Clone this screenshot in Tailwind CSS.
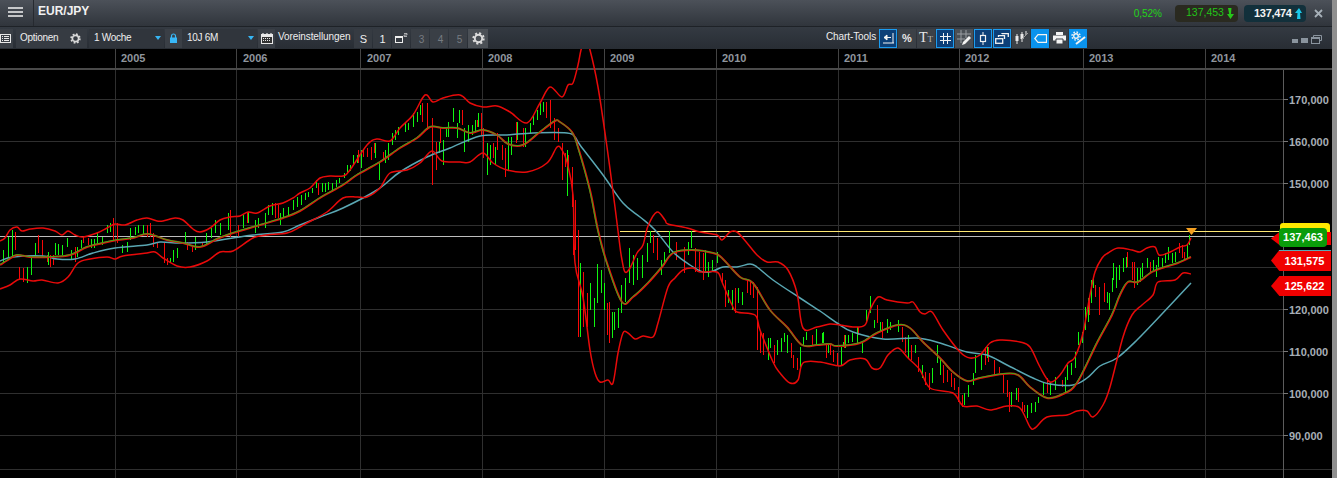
<!DOCTYPE html>
<html lang="de">
<head>
<meta charset="utf-8">
<title>EUR/JPY</title>
<script src="https://cdn.jsdelivr.net/npm/@tailwindcss/browser@4"></script>
</head>
<body class="bg-black">
<div class="w-[1337px] h-[478px] overflow-hidden flex font-['Liberation_Sans',Arial,sans-serif] text-white">
<div class="w-[1332px] h-full flex flex-col">

  <!-- top bar -->
  <header class="h-[27px] shrink-0 flex items-center bg-gradient-to-b from-[#4c5159] to-[#30353c] border-b border-[#1e2227]">
    <div class="w-[34px] h-full flex items-center justify-center border-r border-[#262a30]">
      <svg width="15" height="10" viewBox="0 0 15 10" class="mr-[3px] mb-[3px]"><path d="M0 1h15M0 5h15M0 9h15" stroke="#f2f2f2" stroke-width="1.500"/></svg>
    </div>
    <span class="ml-[4px] text-[12px] font-bold text-[#f1f1f1] mb-[5px]">EUR/JPY</span>
    <div class="ml-auto flex items-center">
      <span class="text-[10px] text-[#22d418] mr-[13px]">0,52%</span>
      <div class="w-[63px] h-[17px] rounded-[4px] bg-[#2a2a20] flex items-center pl-[11px] gap-[3px]">
        <span class="text-[10.500px] text-[#22c418]">137,453</span>
        <svg width="7" height="11" viewBox="0 0 7 11"><path d="M1 0h3.500l-.5 6H7L3.500 11 0 6h2.200z" fill="#27c71a"/></svg>
      </div>
      <div class="w-[62px] h-[17px] rounded-[4px] bg-[#12303b] flex items-center pl-[10px] gap-[3px] ml-[6px]">
        <span class="text-[11px] font-bold text-[#f4f4f4] tracking-[-0.3px]">137,474</span>
        <svg width="7" height="11" viewBox="0 0 7 11"><path d="M4 0l3 5H5l.5 6H2l.5-6H0z" fill="#1cc8e8"/></svg>
      </div>
      <svg width="9" height="9" viewBox="0 0 9 9" class="ml-[8px] mr-[9px]"><path d="M1 1l7 7M8 1L1 8" stroke="#a7b0b8" stroke-width="1.800"/></svg>
    </div>
  </header>

  <!-- toolbar -->
  <div class="h-[22px] shrink-0 flex items-center bg-gradient-to-b from-[#343a42] to-[#282d34] text-[10px] text-[#eeeeee] relative">
    <div class="w-[13px] h-[19px] flex items-center justify-start bg-[#3a3f46]">
      <svg width="11" height="9" viewBox="0 0 11 9"><rect x=".5" y=".5" width="10" height="8" fill="none" stroke="#e8e8e8"/><path d="M2 2.500h1M4 2.500h5M2 4.500h1M4 4.500h5M2 6.500h1M4 6.500h5" stroke="#e8e8e8"/></svg>
    </div>
    <div class="ml-[3px] w-[71px] h-[19px] flex items-center bg-[#363b42] pl-[4px] gap-[10px]">
      <span class="tracking-[-0.3px] mb-[1px]">Optionen</span>
      <svg width="11" height="11" viewBox="0 0 12 12" class="ml-[2px]"><circle cx="6" cy="6" r="3.400" fill="none" stroke="#d8d8d8" stroke-width="1.800"/><circle cx="6" cy="6" r="4.800" fill="none" stroke="#d8d8d8" stroke-width="1.800" stroke-dasharray="1.900 1.870"/></svg>
    </div>
    <div class="ml-[2px] w-[75px] h-[19px] flex items-center justify-between bg-[#30353c] pl-[5px] pr-[3px]">
      <span class="tracking-[-0.3px] mb-[1px]">1 Woche</span>
      <svg width="6" height="4" viewBox="0 0 6 4"><path d="M0 0h6L3 4z" fill="#36b6f4"/></svg>
    </div>
    <div class="w-[17px] h-[19px] ml-[1px] flex items-center justify-center bg-[#3a3f46]">
      <svg width="7" height="10" viewBox="0 0 7 10"><path d="M1.500 5V3a2 2 0 0 1 4 0v2" fill="none" stroke="#38b8f8" stroke-width="1.200"/><rect y="4.500" width="7" height="5.500" fill="#38b8f8"/></svg>
    </div>
    <div class="w-[75px] h-[19px] flex items-center justify-between bg-[#30353c] pl-[5px] pr-[3px]">
      <span class="tracking-[-0.3px] mb-[1px]">10J 6M</span>
      <svg width="6" height="4" viewBox="0 0 6 4"><path d="M0 0h6L3 4z" fill="#36b6f4"/></svg>
    </div>
    <div class="w-[17px] h-[19px] ml-[1px] flex items-center justify-center bg-[#3a3f46]">
      <svg width="12" height="12" viewBox="0 0 12 12"><path d="M0 2h12v10H0z" fill="#e8e8e8"/><path d="M1 5h10v6H1z" fill="#333"/><path d="M2 1v2M10 1v2M6 1v2" stroke="#e8e8e8" stroke-width="1.200"/><path d="M2 6.500h8M2 8.500h8" stroke="#e8e8e8" stroke-dasharray="1 1"/></svg>
    </div>
    <span class="ml-[3px] w-[76px] mb-[3px] whitespace-nowrap tracking-[-0.1px]">Voreinstellungen</span>
    <div class="w-[18px] h-[19px] flex items-center justify-center bg-[#363b42] text-[11px]"><span class="mt-[2px] ml-[1px]">S</span></div>
    <div class="ml-px w-[18px] h-[19px] flex items-center justify-center bg-[#363b42] text-[11px]"><span class="mt-[2px] ml-[1px]">1</span></div>
    <div class="ml-px w-[18px] h-[19px] flex items-start justify-center bg-[#363b42]">
      <svg width="13" height="11" viewBox="0 0 13 11" class="mt-[4px]"><rect x=".5" y="3.500" width="7" height="6" fill="none" stroke="#eee"/><path d="M0 3h8v2H0z" fill="#eee"/><path d="M9 .5h3v1.500H9v1.500h3" fill="none" stroke="#ddd" stroke-width=".7"/></svg>
    </div>
    <div class="ml-px w-[18px] h-[19px] flex items-center justify-center bg-[#3a3f46] text-[#777c82]"><span class="mt-[2px] ml-[3px]">3</span></div>
    <div class="ml-px w-[18px] h-[19px] flex items-center justify-center bg-[#3a3f46] text-[#777c82]"><span class="mt-[2px] ml-[3px]">4</span></div>
    <div class="ml-px w-[18px] h-[19px] flex items-center justify-center bg-[#3a3f46] text-[#777c82]"><span class="mt-[2px] ml-[3px]">5</span></div>
    <div class="ml-px w-[20px] h-[19px] flex items-center justify-center bg-[#4b5056]">
      <svg width="13" height="13" viewBox="0 0 12 12"><circle cx="6" cy="6" r="3.400" fill="none" stroke="#dcdcdc" stroke-width="1.800"/><circle cx="6" cy="6" r="4.800" fill="none" stroke="#dcdcdc" stroke-width="1.800" stroke-dasharray="1.900 1.870"/></svg>
    </div>

    <span class="ml-[338px] w-[53px] mb-[3px] whitespace-nowrap tracking-[-0.1px]">Chart-Tools</span>
    <div class="flex gap-px items-center">
      <div class="w-[18px] h-[19px] bg-[#0c3f78] border border-[#1c9cf0] flex items-center justify-center"><svg width="12" height="11" viewBox="0 0 12 11"><path d="M1 10h11M11 0v10" stroke="#f2f2f2"/><path d="M2 4.500h7M2 4.500l3-2.500v5z" stroke="#f2f2f2" fill="#f2f2f2"/></svg></div>
      <div class="w-[18px] h-[19px] bg-[#3c4147] flex items-center justify-center text-[11px] font-bold text-[#e8e8e8]">%</div>
      <div class="w-[18px] h-[19px] bg-[#3c4147] flex items-center justify-center font-['Liberation_Serif',serif] text-[#e8e8e8]"><span class="text-[14px] leading-none">T</span><span class="text-[9px] leading-none mt-[3px] text-[#bbb]">T</span></div>
      <div class="w-[18px] h-[19px] bg-[#0c3f78] border border-[#1c9cf0] flex items-center justify-center"><svg width="11" height="11" viewBox="0 0 11 11"><path d="M3.500 0v11M7.500 0v11M0 3.500h11M0 7.500h11" stroke="#f2f2f2"/></svg></div>
      <div class="w-[18px] h-[19px] bg-[#4b5056] flex items-center justify-center"><svg width="16" height="16" viewBox="0 0 16 16"><path d="M5 0v13M10 0v8M1 4h14M1 9h8" stroke="#9a9ea2"/><path d="M6 15l1-3 6-6 2 2-6 6z" fill="#f2f2f2"/></svg></div>
      <div class="w-[18px] h-[19px] bg-[#0c3f78] border border-[#1c9cf0] flex items-center justify-center"><svg width="8" height="13" viewBox="0 0 8 13"><path d="M4 0v13" stroke="#f2f2f2"/><rect x="1.500" y="3.500" width="5" height="6" fill="#0c3f78" stroke="#f2f2f2" stroke-width="1.200"/></svg></div>
      <div class="w-[18px] h-[19px] bg-[#0c3f78] border border-[#1c9cf0] flex items-center justify-center"><svg width="14" height="11" viewBox="0 0 14 11"><rect x=".7" y="5.700" width="7" height="4.600" fill="none" stroke="#f2f2f2" stroke-width="1.300"/><path d="M3.500 4V2.700h6V6M7 1V.7h6.300V4" fill="none" stroke="#f2f2f2" stroke-width="1.300"/></svg></div>
      <div class="w-[18px] h-[19px] bg-[#3c4147] flex items-center justify-center"><svg width="14" height="14" viewBox="0 0 14 14"><path d="M3 3v10M8 1v10M12 0v4" stroke="#e8e8e8"/><rect x="1.500" y="5" width="3" height="5" fill="#e8e8e8"/><rect x="6.500" y="3" width="3" height="5" fill="#e8e8e8"/><path d="M7 9l7-7" stroke="#9a9a9a"/></svg></div>
      <div class="w-[18px] h-[19px] bg-[#0a93ee] flex items-center justify-center"><svg width="13" height="9" viewBox="0 0 13 9"><path d="M12.500.700H4L.8 4.500 4 8.300h8.500z" fill="none" stroke="#f2f2f2" stroke-width="1.200"/></svg></div>
      <div class="w-[18px] h-[19px] bg-[#3c4147] flex items-center justify-center"><svg width="13" height="12" viewBox="0 0 13 12"><path d="M3 0h7v3H3zM0 3.500h13v5H0z" fill="#f4f4f4"/><path d="M3 7h7v5H3z" fill="#f4f4f4" stroke="#3c4147"/></svg></div>
      <div class="w-[18px] h-[19px] bg-[#0a93ee] flex items-center justify-center"><svg width="15" height="14" viewBox="0 0 15 14"><circle cx="5" cy="5" r="2.300" fill="none" stroke="#f2f2f2" stroke-width="1.400"/><circle cx="5" cy="5" r="4" fill="none" stroke="#f2f2f2" stroke-width="1.400" stroke-dasharray="1.600 1.540"/><path d="M5 13l9-7" stroke="#f2f2f2" stroke-width="2"/></svg></div>
    </div>
    <div class="ml-auto mr-[10px] flex items-center gap-[2px] mt-[3px]">
      <div class="w-[6px] h-[4px] mt-[2px] bg-[#8a949e]"></div>
      <div class="w-[7px] h-[5px] mt-[2px] ml-px bg-[#8a949e]"></div>
      <svg width="11" height="9" viewBox="0 0 11 9" class="ml-px"><path d="M2.500 2V.5h8v5H9" fill="none" stroke="#8a949e"/><rect y="2" width="9" height="7" fill="#8a949e"/><rect x="1" y="4" width="7" height="4" fill="#2b3037"/></svg>
    </div>
  </div>

  <!-- chart -->
  <section class="flex-1 min-h-0 flex flex-col bg-black relative overflow-hidden">
    <div class="h-[21px] shrink-0 flex text-[11px] font-bold text-[#8f959d] border-b-2 border-[#4a4a4a]">
      <div class="w-[115px]"></div>
      <div class="w-[121px] border-l border-[#444] pl-[5px] leading-[18px]">2005</div>
      <div class="w-[124px] border-l border-[#444] pl-[6px] leading-[18px]">2006</div>
      <div class="w-[122px] border-l border-[#444] pl-[6px] leading-[18px]">2007</div>
      <div class="w-[122px] border-l border-[#444] pl-[5px] leading-[18px]">2008</div>
      <div class="w-[112px] border-l border-[#444] pl-[5px] leading-[18px]">2009</div>
      <div class="w-[122px] border-l border-[#444] pl-[5px] leading-[18px]">2010</div>
      <div class="w-[121px] border-l border-[#444] pl-[5px] leading-[18px]">2011</div>
      <div class="w-[124px] border-l border-[#444] pl-[5px] leading-[18px]">2012</div>
      <div class="w-[122px] border-l border-[#444] pl-[5px] leading-[18px]">2013</div>
      <div class="w-[127px] border-l border-[#444] pl-[5px] leading-[18px]">2014</div>
    </div>
    <div class="flex-1 min-h-0 relative">
      <svg class="block overflow-visible" width="1332" height="408" viewBox="0 70 1332 408" fill="none">
        <!-- grid -->
        <g stroke="#2f2f2f" shape-rendering="crispEdges">
          <path d="M0 99.500H1283M0 141.500H1283M0 183.500H1283M0 225.500H1283M0 267.500H1283M0 309.500H1283M0 351.500H1283M0 393.500H1283M0 435.500H1283M0 469.500H1332"/>
          <path d="M115.500 70V478M236.500 70V478M360.500 70V478M482.500 70V478M604.500 70V478M716.500 70V478M838.500 70V478M959.500 70V478M1083.500 70V478M1205.500 70V478"/>
        </g>
        <path d="M1283.500 70V478" stroke="#5c5c5c" shape-rendering="crispEdges"/>
        <path d="M1283 99.500h5M1283 141.500h5M1283 183.500h5M1283 225.500h5M1283 309.500h5M1283 351.500h5M1283 393.500h5M1283 435.500h5" stroke="#777" shape-rendering="crispEdges"/>
        <!-- levels -->
        <path d="M0 236.500H1283" stroke="#bdbdbd" shape-rendering="crispEdges"/>
        <path d="M620 231.500H1283" stroke="#ffe873" shape-rendering="crispEdges"/>
        <!-- bars -->
        <path stroke="#10f510" stroke-width="1" shape-rendering="crispEdges" d="M3 250V263M8 237V257M12 230V257M27 267V283M31 257V275M35 243V255M48 252V265M55 243V255M58 244V255M62 245V255M67 238V247M71 250V260M77 247V257M81 240V248M91 239V248M94 239V248M97 233V243M102 237V245M107 225V233M110 223V232M122 245V253M127 242V252M130 228V240M135 227V235M138 225V233M143 225V235M170 258V263M173 250V262M177 248V258M185 232V243M195 237V250M206 233V245M211 228V238M215 220V233M220 223V235M228 213V230M243 215V228M248 212V223M255 220V233M258 218V228M265 213V228M268 205V215M272 203V215M280 213V225M283 208V218M288 207V215M293 200V210M297 197V207
        M301 195V205M305 193V200M308 192V197M312 188V193M316 180V188M322 183V192M325 183V192M328 182V190M332 183V192M336 180V187M339 178V183M344 173V178M347 165V173M350 165V171M353 155V165M357 155V163M361 150V168M375 143V158M379 163V180M385 150V163M388 143V160M392 133V145M395 130V140M398 127V135M405 123V132M408 123V130M413 113V127M417 112V122M420 105V115M439 142V153M443 140V165M446 128V137M448 122V137M453 108V122M457 123V138M459 110V123M464 128V152M468 125V142M472 125V135M475 120V133M478 113V127M487 143V175M490 145V165M495 147V165M508 137V170M511 137V155M517 122V140M525 128V147M530 123V133M533 115V125M537 110V120M540 103V115M543 102V112M567 150V196
        M580 263V337M590 283V310M594 298V327M597 264V303M601 270V293M604 283V310M612 312V338M614 312V330M618 308V328M621 285V313M625 278V302M629 248V283M633 255V285M637 258V280M642 255V278M647 243V262M650 231V243M661 260V275M664 252V265M669 231V253M688 242V255M691 231V248M705 250V272M708 262V277M712 260V272M717 252V263M728 290V303M732 290V310M738 288V303M742 292V305M768 338V360M770 338V348M777 340V355M781 338V352M784 333V342M787 335V353M800 347V367M803 337V345M806 332V340M816 329V345M822 333V343M828 345V353M830 343V350
        M823 332V343M841 347V365M843 342V347M845 335V348M848 335V343M852 333V342M857 327V343M862 343V353M866 310V323M870 296V313M874 320V328M880 322V332M887 319V333M890 322V330M898 320V332M908 335V358M915 345V353M922 365V378M932 368V383M937 345V363M940 358V375M958 387V398M964 393V405M968 385V397M973 373V385M975 355V373M981 353V370M987 347V358M1011 392V407M1016 388V400M1027 405V418M1031 403V413M1035 402V412M1038 397V403M1043 382V395M1050 383V395M1055 377V390M1065 377V393M1067 365V380M1071 363V375M1075 352V368M1078 332V345M1082 332V343M1085 307V330M1088 298V322M1091 280V303M1093 277V288M1107 292V303M1109 293V310M1112 278V292M1113 263V280M1116 267V288M1119 265V280M1123 258V272M1126 257V268M1137 268V285M1140 268V282M1142 263V277M1147 258V268M1153 260V270M1156 265V277M1158 257V267M1162 258V268M1165 253V263M1168 247V260M1172 253V263M1175 252V262M1187 245V258M1189 235V245"/>
        <path stroke="#f80808" stroke-width="1" shape-rendering="crispEdges" d="M15 232V250M19 267V280M23 268V282M38 235V253M42 240V258M47 255V262M50 255V267M53 255V265M75 247V262M83 237V243M88 238V245M113 218V240M117 223V243M147 225V237M150 223V237M153 233V247M157 242V248M164 243V263M167 258V265M187 242V250M192 245V252M202 242V247M230 210V237M238 225V237M247 212V223M275 203V218M278 205V218
        M318 183V195M358 150V163M363 150V157M367 148V157M371 147V160M374 143V153M383 152V160M422 103V122M427 103V130M432 118V185M436 142V170M440 128V143M462 110V125M477 120V127M481 113V135M483 128V158M493 143V158M497 133V150M502 145V160M505 148V177M516 122V143M523 128V147M546 102V118M550 100V128M554 118V140M558 128V142M562 143V180M565 153V167M568 155V170M572 167V207M575 200V250M573 230V255M578 230V337M583 272V327M587 293V327
        M607 303V335M609 302V343M653 235V253M657 238V260M676 242V260M684 247V273M695 248V272M699 252V270M703 253V280M722 273V283M725 280V307M735 288V313M747 280V293M750 280V295M753 282V298M757 287V350M760 332V353M763 333V355M774 345V363M791 343V358M793 355V368M797 358V370M812 335V345M826 345V358M833 350V362M837 353V365
        M826 343V352M830 345V355M844 335V348M858 327V335M877 305V323M882 322V338M902 327V342M905 337V353M911 345V360M918 357V372M925 372V385M929 373V390M943 365V383M947 370V382M951 373V387M954 378V390M958 387V402M962 395V407M985 347V365M988 347V362M994 360V375M999 367V373M1003 375V393M1007 380V397M1009 392V412M1018 388V402M1022 402V412M1024 405V412M1047 378V393M1062 380V387M1089 298V315M1095 285V297M1099 287V315M1104 283V302M1127 252V267M1132 262V280M1134 262V288M1150 262V273M1179 243V253M1182 245V258M1184 252V260"/>
        <!-- teal moving average -->
        <path data-curve stroke="#5aa7b3" stroke-width="1.500" stroke-linejoin="round" d="M0 261L13 257L43 256L57 259L75 259L93 253L115 248L147 245L160 242L180 243L207 242L233 238L253 235L283 232L300 225L320 217L343 208L377 190L400 172L427 157L450 148L480 136L507 135L533 133L567 133L575 137L580 145L603 175L623 203L640 217L655 230L673 252L690 265L703 272L713 271L723 267L737 267L750 264L757 267L773 280L800 298L820 311L837 323L853 332L883 339L917 338L940 343L967 352L987 355L1007 365L1033 378L1050 384L1073 385L1087 378L1100 366L1117 358L1137 340L1161 315L1191 283"/>
        <!-- middle band -->
        <path data-curve stroke="#ea0c0c" stroke-width="2" stroke-linejoin="round" d="M0 265L8 260L17 255L30 257L50 257L70 255L87 247L103 243L117 240L133 238L148 234L167 240L183 243L200 247L217 239L233 233L260 225L283 218L300 211L320 198L343 185L357 175L380 162L400 148L417 138L430 127L443 128L457 128L470 133L483 130L497 135L508 144L523 145L540 132L555 121L560 122L572 132L578 147L590 190L598 230L607 263L622 302L633 297L648 283L662 267L673 253L692 250L713 253L722 258L740 277L753 283L770 310L787 327L802 345L817 345L830 344L837 346L860 343L877 333L898 325L910 328L923 342L940 358L953 372L967 381L980 378L1003 374L1018 375L1030 387L1047 398L1063 394L1077 383L1097 343L1112 315L1120 295L1128 282L1138 282L1152 272L1165 267L1178 263L1191 257"/>
        <path data-curve stroke="#1cc81c" stroke-width=".9" stroke-linejoin="round" transform="translate(-0.5 -0.3)" d="M0 265L8 260L17 255L30 257L50 257L70 255L87 247L103 243L117 240L133 238L148 234L167 240L183 243L200 247L217 239L233 233L260 225L283 218L300 211L320 198L343 185L357 175L380 162L400 148L417 138L430 127L443 128L457 128L470 133L483 130L497 135L508 144L523 145L540 132L555 121L560 122L572 132L578 147L590 190L598 230L607 263L622 302L633 297L648 283L662 267L673 253L692 250L713 253L722 258L740 277L753 283L770 310L787 327L802 345L817 345L830 344L837 346L860 343L877 333L898 325L910 328L923 342L940 358L953 372L967 381L980 378L1003 374L1018 375L1030 387L1047 398L1063 394L1077 383L1097 343L1112 315L1120 295L1128 282L1138 282L1152 272L1165 267L1178 263L1191 257"/>
        <!-- upper band -->
        <path data-curve stroke="#e80a0a" stroke-width="1.500" stroke-linejoin="round" d="M0 241L5 238L10 230L17 227L22 231L30 229L43 228L55 231L62 235L68 231L75 235L83 237L97 233L107 228L115 224L125 225L137 220L147 218L157 221L163 221L175 218L183 220L193 229L200 232L210 228L220 220L230 217L240 216L248 212L257 213L270 206L283 203L293 198L300 193L310 188L320 178L330 176L343 176L350 170L367 145L377 139L390 141L400 128L413 115L425 95L433 102L443 98L460 95L470 103L483 107L497 106L510 112L527 123L540 103L550 87L562 97L568 85L573 83L578 65L581 50L585 38L590 50L598 87L607 147L615 207L620 247L622 260L625 272L630 268L637 253L643 245L648 226L657 212L665 220L668 224L687 228L700 232L717 235L722 240L730 232L737 232L747 243L757 255L767 262L778 262L788 270L797 293L803 328L817 327L830 324L840 325L853 327L865 325L870 310L878 297L887 300L907 303L913 302L920 312L925 314L932 312L943 330L960 352L970 358L980 355L990 343L1000 340L1020 342L1030 347L1040 367L1050 382L1060 375L1068 363L1075 357L1083 333L1090 295L1095 272L1102 258L1108 253L1118 248L1132 250L1140 252L1147 248L1155 247L1159 255L1168 253L1180 247L1187 245L1191 238"/>
        <!-- lower band -->
        <path data-curve stroke="#e80a0a" stroke-width="1.500" stroke-linejoin="round" d="M0 289L10 285L20 279L33 281L42 280L58 283L68 277L78 263L90 259L107 257L115 259L123 256L147 253L155 252L163 258L177 266L190 267L207 261L220 252L233 251L253 238L267 235L287 233L300 227L307 223L327 212L343 198L357 197L367 197L380 188L390 173L407 170L420 163L432 151L442 161L460 162L470 162L483 153L493 163L507 170L527 172L547 163L557 147L562 150L567 162L573 195L575 263L583 297L590 350L595 373L600 382L608 380L613 383L618 353L623 333L628 333L635 339L643 336L653 337L658 323L668 287L675 278L683 270L693 268L700 272L717 272L722 282L732 305L737 312L755 315L760 330L773 362L780 373L790 383L798 380L803 363L820 362L840 366L850 360L865 359L872 368L880 368L888 355L898 348L908 358L920 370L930 388L953 393L963 406L977 406L990 410L1007 406L1020 408L1030 427L1035 428L1047 417L1067 415L1077 411L1087 411L1093 417L1103 405L1110 387L1123 337L1132 315L1142 305L1153 295L1158 282L1175 280L1183 273L1191 274"/>
        <path d="M1186 228h11l-5.500 7z" fill="#f5a020"/>
        <!-- axis labels -->
        <g fill="#a7aeb6" font-size="11" font-weight="700" font-family="'Liberation Sans',Arial,sans-serif">
          <text x="1289" y="103.500">170,000</text>
          <text x="1289" y="145.500">160,000</text>
          <text x="1289" y="187.500">150,000</text>
          <text x="1289" y="313.500">120,000</text>
          <text x="1289" y="355.500">110,000</text>
          <text x="1289" y="397.500">100,000</text>
          <text x="1289" y="439.500">90,000</text>
        </g>
      </svg>

      <!-- price tags over the axis -->
      <div class="absolute left-[1280px] top-[153px] w-[50px] h-[20px] rounded-[3px] bg-[#ffe900]"></div>
      <div class="absolute left-[1271px] top-[162px] w-[60px] h-[13px] bg-[#f00000] [clip-path:polygon(0_50%,14%_0,100%_0,100%_100%,14%_100%)]"></div>
      <div class="absolute left-[1279px] top-[158px] w-[48px] h-[19px] rounded-[4px] bg-[#0a9c0a] text-[11px] font-bold text-white flex items-center justify-center">137,463</div>
      <div class="absolute left-[1271px] top-[180px] w-[60px] h-[21px] bg-[#f00000] [clip-path:polygon(0_50%,14%_0,100%_0,100%_100%,14%_100%)] border-t border-[#5aa7b3] text-[11px] font-bold text-white flex items-center justify-center pl-[7px]">131,575</div>
      <div class="absolute left-[1271px] top-[206px] w-[60px] h-[20px] bg-[#f00000] [clip-path:polygon(0_50%,14%_0,100%_0,100%_100%,14%_100%)] text-[11px] font-bold text-white flex items-center justify-center pl-[7px]">125,622</div>
    </div>
  </section>
</div>
<div class="flex-1 bg-[#8f8f8f]"></div>
</div>
<script>
document.querySelectorAll('[data-curve]').forEach(function (path) {
  var n = path.getAttribute('d').match(/-?[\d.]+/g).map(Number), a = [], i;
  for (i = 0; i < n.length; i += 2) a.push([n[i], n[i + 1]]);
  var d = 'M' + a[0][0] + ' ' + a[0][1];
  for (i = 0; i < a.length - 1; i++) {
    var p0 = a[Math.max(i - 1, 0)], p1 = a[i], p2 = a[i + 1], p3 = a[Math.min(i + 2, a.length - 1)];
    d += 'C' + (p1[0] + (p2[0] - p0[0]) / 6) + ' ' + (p1[1] + (p2[1] - p0[1]) / 6) + ' ' +
      (p2[0] - (p3[0] - p1[0]) / 6) + ' ' + (p2[1] - (p3[1] - p1[1]) / 6) + ' ' + p2[0] + ' ' + p2[1];
  }
  path.setAttribute('d', d);
});
</script>
</body>
</html>
